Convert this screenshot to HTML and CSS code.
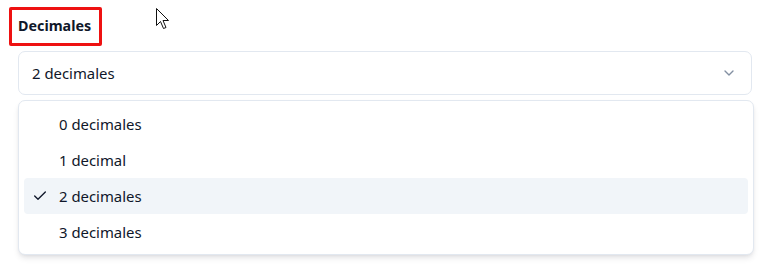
FILE: index.html
```html
<!DOCTYPE html>
<html lang="es">
<head>
<meta charset="utf-8">
<link rel="stylesheet" href="styles.css">
</head>
<body>
<div class="page">
  <div class="label-wrap"><span class="label">Decimales</span></div>
  <div class="field">
    <div class="trigger">
      <span class="value">2 decimales</span>
      <svg class="chevron" width="16" height="16" viewBox="0 0 24 24" fill="none" stroke="currentColor" stroke-width="2" stroke-linecap="round" stroke-linejoin="round"><path d="m6 9 6 6 6-6"/></svg>
    </div>
    <div class="menu">
      <div class="item"><span class="check"></span><span>0 decimales</span></div>
      <div class="item"><span class="check"></span><span>1 decimal</span></div>
      <div class="item selected"><span class="check"><svg width="16" height="16" viewBox="0 0 24 24" fill="none" stroke="currentColor" stroke-width="2" stroke-linecap="round" stroke-linejoin="round"><path d="M20 6 9 17l-5-5"/></svg></span><span>2 decimales</span></div>
      <div class="item"><span class="check"></span><span>3 decimales</span></div>
    </div>
  </div>
  <svg class="cursor" width="16" height="24" viewBox="0 0 16 24"><path d="M1.5 1.5 L1.5 18.5 L5.5 14.5 L8.5 21.5 L11 20.5 L8 13.5 L13.5 13.5 Z" fill="#fff" stroke="#111" stroke-width="1" stroke-linejoin="miter"/></svg>
</div>
</body>
</html>
```

FILE: styles.css
```css
html, body {
  margin: 0;
  padding: 0;
  background: #ffffff;
}
body {
  font-family: "Noto Sans", "Open Sans", Arial, sans-serif;
  color: #0f172a;
  width: 765px;
  height: 266px;
  overflow: hidden;
}
.page {
  position: relative;
  padding: 7px 13px 0 18px;
}
.label-wrap {
  display: inline-block;
  margin-left: -9px;
  border: 3px solid #ee1111;
  border-radius: 2px;
  padding: 5px 8px 6px 6px;
}
.label {
  font-size: 14.3px;
  font-weight: 700;
  line-height: 22px;
  display: block;
}
.field {
  position: relative;
  margin-top: 5px;
  height: 210px;
}
.trigger {
  height: 42px;
  border: 1px solid #e2e8f0;
  border-radius: 7px;
  display: flex;
  align-items: center;
  justify-content: space-between;
  padding: 0 14px 0 13px;
  font-size: 14.9px;
}
.chevron {
  color: #64748b;
  opacity: 0.8;
}
.menu {
  position: absolute;
  top: 49px;
  left: 0;
  right: -2px;
  background: #ffffff;
  border: 1px solid #e2e8f0;
  border-radius: 7px;
  box-shadow: 0 4px 6px -1px rgba(15, 23, 42, 0.10), 0 2px 4px -2px rgba(15, 23, 42, 0.10);
  padding: 5px 5px 4px 5px;
  display: flex;
  flex-direction: column;
}
.item {
  height: 36px;
  display: flex;
  align-items: center;
  font-size: 14.9px;
  border-radius: 4px;
  padding-left: 8px;
}
.item.selected {
  background: #f1f5f9;
}
.check {
  width: 27px;
  height: 16px;
  display: flex;
  align-items: center;
}
.cursor {
  position: absolute;
  left: 155px;
  top: 7px;
}
```
